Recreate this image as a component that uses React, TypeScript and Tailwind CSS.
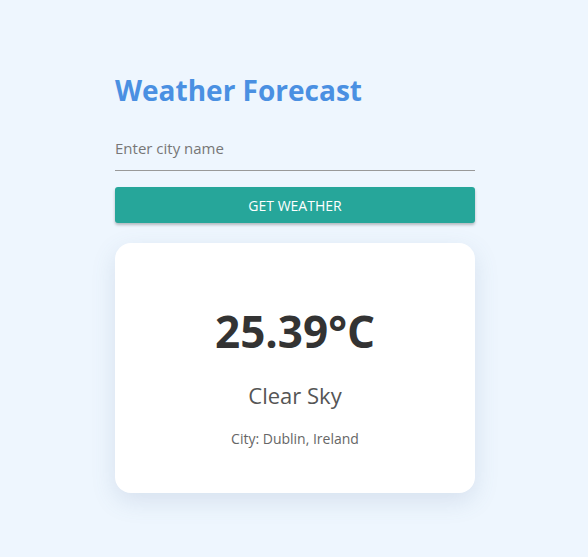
export default function App() {
  return (
    <div className="flex min-h-[557px] justify-center bg-[#eef6fe] pl-[2px] font-['Open_Sans',sans-serif]">
      <div className="w-[360px] pt-[70px]">
        <h1 className="text-[28px] leading-[40px] font-bold text-[#4a90e2]">Weather Forecast</h1>

        <input
          type="text"
          placeholder="Enter city name"
          className="mt-[21px] block h-[40px] w-full border-b border-[#999] bg-transparent pb-[5px] text-[15px] text-[#333] outline-none placeholder:text-[#777]"
        />

        <button className="mt-[16px] block h-[36px] w-full rounded-[3px] bg-[#26a69a] text-[14px] text-white uppercase shadow-[0_2px_3px_rgba(0,0,0,0.25)]">
          Get Weather
        </button>

        <div className="mt-[20px] flex h-[250px] flex-col items-center rounded-[16px] bg-white pt-[58px] shadow-[0_8px_24px_rgba(80,110,150,0.15)]">
          <div className="text-[44px] leading-[60px] font-bold text-[#333]">25.39°C</div>
          <div className="mt-[20px] text-[22px] leading-[28px] text-[#555]">Clear Sky</div>
          <div className="mt-[20px] text-[14px] leading-[20px] text-[#666]">City: Dublin, Ireland</div>
        </div>
      </div>
    </div>
  );
}
